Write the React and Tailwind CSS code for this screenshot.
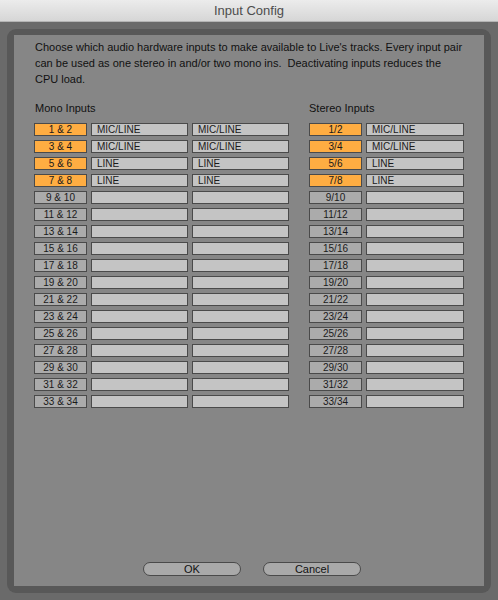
import React from 'react';

const mono = [
    { label: '1 & 2', a: 'MIC/LINE', b: 'MIC/LINE', on: true },
    { label: '3 & 4', a: 'MIC/LINE', b: 'MIC/LINE', on: true },
    { label: '5 & 6', a: 'LINE', b: 'LINE', on: true },
    { label: '7 & 8', a: 'LINE', b: 'LINE', on: true },
];
const stereo = [
    { label: '1/2', a: 'MIC/LINE', on: true },
    { label: '3/4', a: 'MIC/LINE', on: true },
    { label: '5/6', a: 'LINE', on: true },
    { label: '7/8', a: 'LINE', on: true },
];
for (let i = 9; i < 34; i += 2) {
    mono.push({ label: `${i} & ${i + 1}`, a: '', b: '', on: false });
    stereo.push({ label: `${i}/${i + 1}`, a: '', on: false });
}

const Label = ({ text, on }) => (
    <div
        className={`w-[53px] h-[13px] border border-[#4a4a4a] flex items-center justify-center text-[10px] leading-none text-[#1a1a1a] ${
            on ? 'bg-[#ffad42]' : 'bg-[#ababab]'
        }`}
    >
        {text}
    </div>
);

const Field = ({ text, w }) => (
    <div className={`${w} h-[13px] border border-[#4a4a4a] bg-[#c4c4c4] flex items-center pl-[5px] text-[10px] leading-none text-[#1a1a1a]`}>
        {text}
    </div>
);

export default function App() {
    return (
        <div
            className="w-[498px] h-[600px] bg-[#6a6a6a] flex flex-col overflow-hidden"
            style={{ fontFamily: '"Liberation Sans", Arial, sans-serif' }}
        >
            <div className="h-[22px] shrink-0 bg-gradient-to-b from-[#ececec] to-[#d6d6d6] border-b border-[#b4b4b4] flex items-center justify-center text-[13px] text-[#4d4d4d]">
                Input Config
            </div>
            <div className="flex-1 px-[7px] pt-[7px] pb-[7px] flex">
                <div className="flex-1 rounded-[9px] bg-[#585858] p-[7px] pt-[6px] flex">
                    <div className="flex-1 bg-[#868686] flex flex-col pl-[20px] pt-[4px]">
                        <p className="pl-[1px] text-[11px] leading-[16px] text-[#111] whitespace-nowrap">
                            Choose which audio hardware inputs to make available to Live's tracks. Every input pair
                            <br />
                            can be used as one stereo in and/or two mono ins.&nbsp; Deactivating inputs reduces the
                            <br />
                            CPU load.
                        </p>
                        <div className="flex gap-[20px] mt-[14px]">
                            <div className="flex flex-col">
                                <div className="pl-[1px] text-[11px] leading-[14px] text-[#111] mb-[8px]">Mono Inputs</div>
                                <div className="flex flex-col gap-[4px]">
                                    {mono.map((r) => (
                                        <div key={r.label} className="flex gap-[4px]">
                                            <Label text={r.label} on={r.on} />
                                            <Field text={r.a} w="w-[97px]" />
                                            <Field text={r.b} w="w-[97px]" />
                                        </div>
                                    ))}
                                </div>
                            </div>
                            <div className="flex flex-col">
                                <div className="text-[11px] leading-[14px] text-[#111] mb-[8px]">Stereo Inputs</div>
                                <div className="flex flex-col gap-[4px]">
                                    {stereo.map((r) => (
                                        <div key={r.label} className="flex gap-[4px]">
                                            <Label text={r.label} on={r.on} />
                                            <Field text={r.a} w="w-[98px]" />
                                        </div>
                                    ))}
                                </div>
                            </div>
                        </div>
                        <div className="flex-1" />
                        <div className="flex gap-[22px] pl-[109px] mb-[10px]">
                            <button className="w-[98px] h-[14px] rounded-full border border-[#4a4a4a] bg-[#a9a9a9] text-[11px] leading-none text-[#111]">
                                OK
                            </button>
                            <button className="w-[98px] h-[14px] rounded-full border border-[#4a4a4a] bg-[#a9a9a9] text-[11px] leading-none text-[#111]">
                                Cancel
                            </button>
                        </div>
                    </div>
                </div>
            </div>
        </div>
    );
}
